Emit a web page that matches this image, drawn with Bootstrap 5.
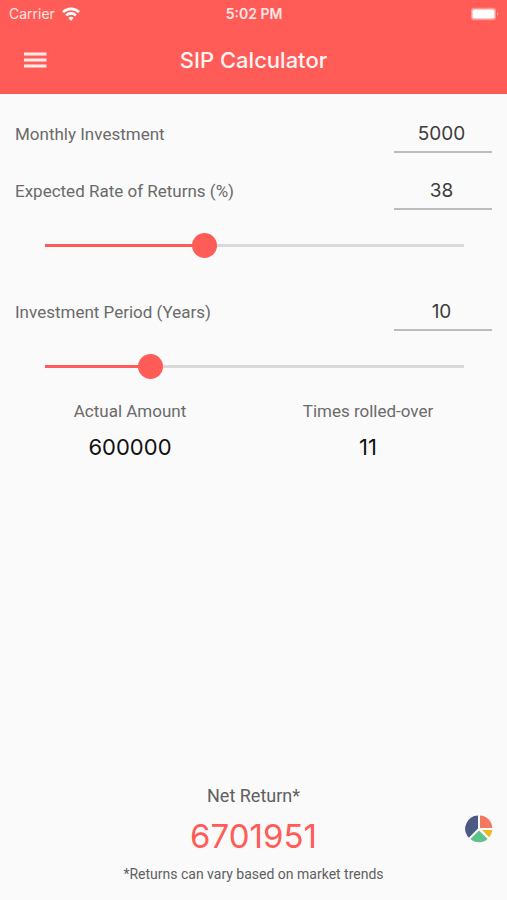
<!DOCTYPE html>
<html lang="en">
<head>
<meta charset="utf-8">
<meta name="viewport" content="width=device-width, initial-scale=1">
<title>SIP Calculator</title>
<link href="https://cdn.jsdelivr.net/npm/bootstrap@5.3.0/dist/css/bootstrap.min.css" rel="stylesheet">
<style>
  :root { --coral: #ff5c57; --ink: #6a6a6a; }
  body { font-family: Roboto, "Liberation Sans", sans-serif; background: #fafafa; color: var(--ink); font-size: 17px; line-height: 24px; }
  .app-header { background: var(--coral); color: #fff; font-family: Inter, sans-serif; }
  .status-bar { height: 27px; padding: 0 8px 0 9px; }
  .status-side { flex: 1 1 0; gap: 7px; }
  .status-bar .carrier { opacity: .85; font-size: 14px; }
  .status-bar .clock { font-size: 14px; font-weight: 600; opacity: .85; }
  .title-bar { height: 67px; padding: 0 23px 2px; }
  .title-bar h1 { font-size: 22px; line-height: 28px; font-weight: 500; opacity: .93; }
  .menu-btn { width: 24px; height: 24px; line-height: 0; }
  .entry { height: 57px; padding: 5px 15px 0; }
  .entry label { padding-top: 7px; }
  .entry input { width: 98px; height: 38px; border: 0; border-bottom: 2px solid #bcbcbc; background: transparent; color: #3c3c3c; font-family: Inter, sans-serif; font-size: 19px; text-align: center; border-radius: 0; padding: 0 3px 0 0; outline: 0; }
  .slider-row { padding: 8px 31px 0 33px; height: 64px; }
  .slider { -webkit-appearance: none; appearance: none; display: block; width: 100%; height: 26px; margin: 0; background: transparent; }
  .slider::-webkit-slider-runnable-track { height: 25px; background: linear-gradient(to right, var(--coral) var(--fill), #d9d9d9 var(--fill)) center / calc(100% - 24px) 3px no-repeat; }
  .slider::-webkit-slider-thumb { -webkit-appearance: none; width: 25px; height: 25px; border-radius: 50%; background: var(--coral); }
  .slider::-moz-range-track { height: 3px; background: #d9d9d9; }
  .slider::-moz-range-progress { height: 3px; background: var(--coral); }
  .slider::-moz-range-thumb { width: 25px; height: 25px; border: 0; background: var(--coral); }
  .slider-row.last { height: 54px; }
  .totals { padding: 0 20px 0 11px; }
  .totals output { font-family: Inter, sans-serif; font-size: 22px; line-height: 32px; margin-top: 8px; color: #111; }
  .net-label { font-size: 18px; color: #606060; }
  .net-value { font-family: Inter, sans-serif; font-size: 33px; line-height: 40px; color: var(--coral); margin: 8px 0; }
  .net-note { font-size: 14px; line-height: 20px; color: #606060; }
  .chart-btn { right: 13px; bottom: 56px; width: 30px; height: 30px; line-height: 0; }
</style>
</head>
<body>
<div class="min-vh-100 d-flex flex-column">
  <header class="app-header">
    <div class="status-bar d-flex align-items-center">
      <div class="status-side d-flex align-items-center">
        <span class="carrier">Carrier</span>
        <svg width="18" height="14" viewBox="0 0 18 14" fill="none" stroke="#fff" stroke-width="2.6" aria-hidden="true">
          <path d="M1 5.1a11.5 11.5 0 0 1 16 0"/><path d="M4.1 8.4a7 7 0 0 1 9.8 0"/><path d="M9 13.8 6.3 11a4 4 0 0 1 5.4 0Z" fill="#fff" stroke="none"/>
        </svg>
      </div>
      <span class="clock">5:02 PM</span>
      <div class="status-side d-flex justify-content-end">
        <svg width="29" height="14" viewBox="0 0 29 14" aria-hidden="true">
          <rect x="1" y=".8" width="25" height="12.400" rx="3" fill="#fff" fill-opacity=".35"/>
          <rect x="2.500" y="2.500" width="22" height="9" rx="1.500" fill="#fff"/><path d="M27 5q2.500 2 0 4z" fill="#fff" fill-opacity=".4"/>
        </svg>
      </div>
    </div>
    <nav class="title-bar d-flex align-items-center justify-content-between" aria-label="Main">
      <button class="menu-btn btn p-0 border-0" type="button" aria-label="Menu">
        <svg width="24" height="24" viewBox="0 0 24 24" fill="#fff" fill-opacity=".88" aria-hidden="true"><path d="M1 4.500h22.500v3H1zM1 10.500h22.500v3H1zM1 16.500h22.500v3H1z"/></svg>
      </button>
      <h1 class="m-0">SIP Calculator</h1>
      <span class="menu-btn"></span>
    </nav>
  </header>

  <main class="flex-grow-1 d-flex flex-column pt-3">
    <form id="sip">
      <div class="entry d-flex justify-content-between align-items-start">
        <label for="monthly">Monthly Investment</label>
        <input id="monthly" type="text" inputmode="numeric" value="5000">
      </div>
      <div class="entry d-flex justify-content-between align-items-start">
        <label for="rate">Expected Rate of Returns (%)</label>
        <input id="rate" type="text" inputmode="numeric" value="38">
      </div>
      <div class="slider-row">
        <input id="rateSlider" class="slider" type="range" min="0" max="100" value="38" data-for="rate" style="--fill:38%" aria-label="Expected Rate of Returns (%)">
      </div>
      <div class="entry d-flex justify-content-between align-items-start">
        <label for="years">Investment Period (Years)</label>
        <input id="years" type="text" inputmode="numeric" value="10">
      </div>
      <div class="slider-row last">
        <input id="yearsSlider" class="slider" type="range" min="0" max="40" value="10" data-for="years" style="--fill:25%" aria-label="Investment Period (Years)">
      </div>
      <div class="totals row g-0 text-center">
        <div class="col-6"><label for="amount" class="d-block">Actual Amount</label><output id="amount" class="d-block">600000</output></div>
        <div class="col-6"><label for="times" class="d-block">Times rolled-over</label><output id="times" class="d-block">11</output></div>
      </div>
    </form>
  </main>

  <footer class="position-relative text-center pb-3">
    <div class="net-label">Net Return*</div>
    <div class="net-value">6701951</div>
    <div class="net-note">*Returns can vary based on market trends</div>
    <button class="chart-btn btn p-0 border-0 position-absolute" type="button" aria-label="Show chart">
      <svg width="30" height="30" viewBox="0 0 30 30" aria-hidden="true">
        <path d="M14 1.500V14.500L4.800 23.700A13.200 13.200 0 0 1 14 1.500Z" fill="#4c5982"/>
        <path d="M16 1.500A13 13 0 0 1 28.300 14H16Z" fill="#f4785f"/>
        <path d="M18 16H28.300A13 13 0 0 1 25.200 23.200Z" fill="#edb91c"/>
        <path d="M15 16.500 23.600 25A13.200 13.200 0 0 1 6.400 25Z" fill="#5fc18b"/>
      </svg>
    </button>
  </footer>
</div>
<script src="https://cdn.jsdelivr.net/npm/bootstrap@5.3.0/dist/js/bootstrap.bundle.min.js"></script>
<script>
  const field = id => document.getElementById(id);
  document.querySelectorAll('.slider').forEach(slider => {
    slider.addEventListener('input', () => {
      slider.style.setProperty('--fill', slider.value / slider.max * 100 + '%');
      field(slider.dataset.for).value = slider.value;
      field('amount').value = field('monthly').value * 12 * field('years').value;
    });
  });
</script>
</body>
</html>
